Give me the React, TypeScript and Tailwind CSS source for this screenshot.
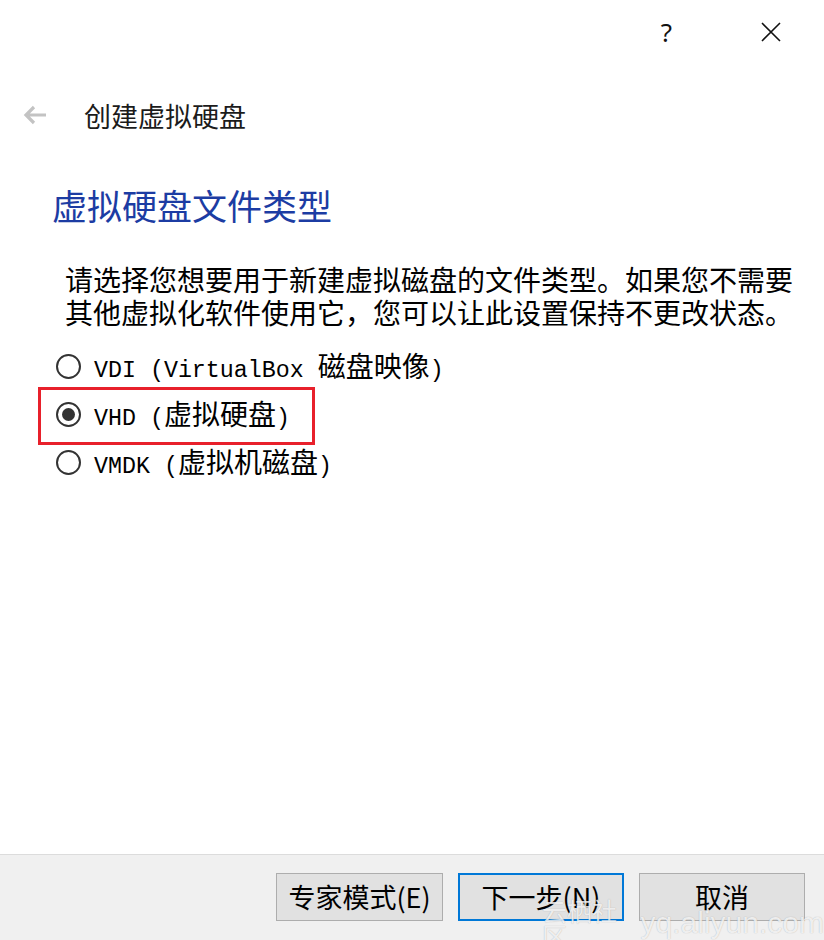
import { useState } from "react";

const cjk = "font-['Noto_Sans_CJK_SC',sans-serif]";

const options = [
  { id: "vdi", latin: "VDI (VirtualBox ", cjk: "磁盘映像", tail: ")" },
  { id: "vhd", latin: "VHD (", cjk: "虚拟硬盘", tail: ")" },
  { id: "vmdk", latin: "VMDK (", cjk: "虚拟机磁盘", tail: ")" },
];

function Radio({ checked }: { checked: boolean }) {
  return (
    <span className="w-[25px] h-[25px] rounded-full border-2 border-[#333333] bg-white flex items-center justify-center shrink-0">
      {checked && <span className="w-[13px] h-[13px] rounded-full bg-[#333333]" />}
    </span>
  );
}

export default function App() {
  const [choice, setChoice] = useState("vhd");

  return (
    <div className={`w-[824px] h-[940px] bg-white flex flex-col relative ${cjk}`}>
      {/* Title bar */}
      <div className="h-16 flex items-center justify-end pr-[43px]">
        <span className="text-[26px] leading-none text-[#111] font-['Noto_Sans',sans-serif]">?</span>
        <svg className="ml-[89px]" width="20" height="20" viewBox="0 0 20 20">
          <path d="M1 1 L19 19 M19 1 L1 19" stroke="#111" strokeWidth="1.6" fill="none" />
        </svg>
      </div>

      {/* Wizard header */}
      <div className="mt-[24px] h-[54px] flex items-center pl-[22px]">
        <svg width="25" height="20" viewBox="0 0 25 20">
          <path d="M24 10 H4 M12 2 L4 10 L12 18" stroke="#c3c3c3" strokeWidth="3.2" fill="none" />
        </svg>
        <span className="ml-[37px] text-[27px] leading-none text-[#1b1b1b]">创建虚拟硬盘</span>
      </div>

      <main className="flex-1">
        <h1 className="mt-[42px] ml-[52px] text-[35px] leading-[42px] text-[#1c3ca3]">虚拟硬盘文件类型</h1>

        <p className="mt-[37px] ml-[65px] text-[28px] leading-[33px] text-black">
          请选择您想要用于新建虚拟磁盘的文件类型。如果您不需要
          <br />
          其他虚拟化软件使用它，您可以让此设置保持不更改状态。
        </p>

        <div className="mt-[13px] flex flex-col">
          {options.map((o) => (
            <div
              key={o.id}
              className="relative h-[48px] pl-[56px] flex items-center cursor-pointer"
              onClick={() => setChoice(o.id)}
            >
              <Radio checked={choice === o.id} />
              <span className="ml-[13px] flex items-baseline text-black whitespace-pre">
                <span className="font-['Liberation_Mono',monospace] text-[23.3px]">{o.latin}</span>
                <span className="text-[28px]">{o.cjk}</span>
                <span className="font-['Liberation_Mono',monospace] text-[23.3px]">{o.tail}</span>
              </span>
              {o.id === "vhd" && (
                <div className="absolute left-[38px] top-[-3px] w-[277px] h-[58px] border-[3px] border-[#e8202b] pointer-events-none" />
              )}
            </div>
          ))}
        </div>
      </main>

      {/* Footer */}
      <footer className="h-[86px] bg-[#f0f0f0] border-t border-[#dcdcdc] flex justify-end items-start pt-[18px] pr-[19px] gap-[15px]">
        <button className="w-[167px] h-[48px] bg-[#e1e1e1] border border-[#adadad] text-[27px] text-black flex items-center justify-center">
          专家模式(E)
        </button>
        <button className="w-[166px] h-[48px] bg-[#e1e1e1] border-2 border-[#0078d7] text-[27px] text-black flex items-center justify-center">
          下一步(N)
        </button>
        <button className="w-[166px] h-[48px] bg-[#e1e1e1] border border-[#adadad] text-[27px] text-black flex items-center justify-center">
          取消
        </button>
      </footer>

      {/* Watermark */}
      <div className="absolute left-[542px] top-[898px] flex items-center text-white/80 pointer-events-none [text-shadow:0_0_1px_rgba(0,0,0,0.3)]">
        <span className="text-[25px] leading-none">云栖社区</span>
        <span className="ml-[10px] text-[30px] leading-none font-['Liberation_Sans',sans-serif]">yq.aliyun.com</span>
      </div>
    </div>
  );
}
